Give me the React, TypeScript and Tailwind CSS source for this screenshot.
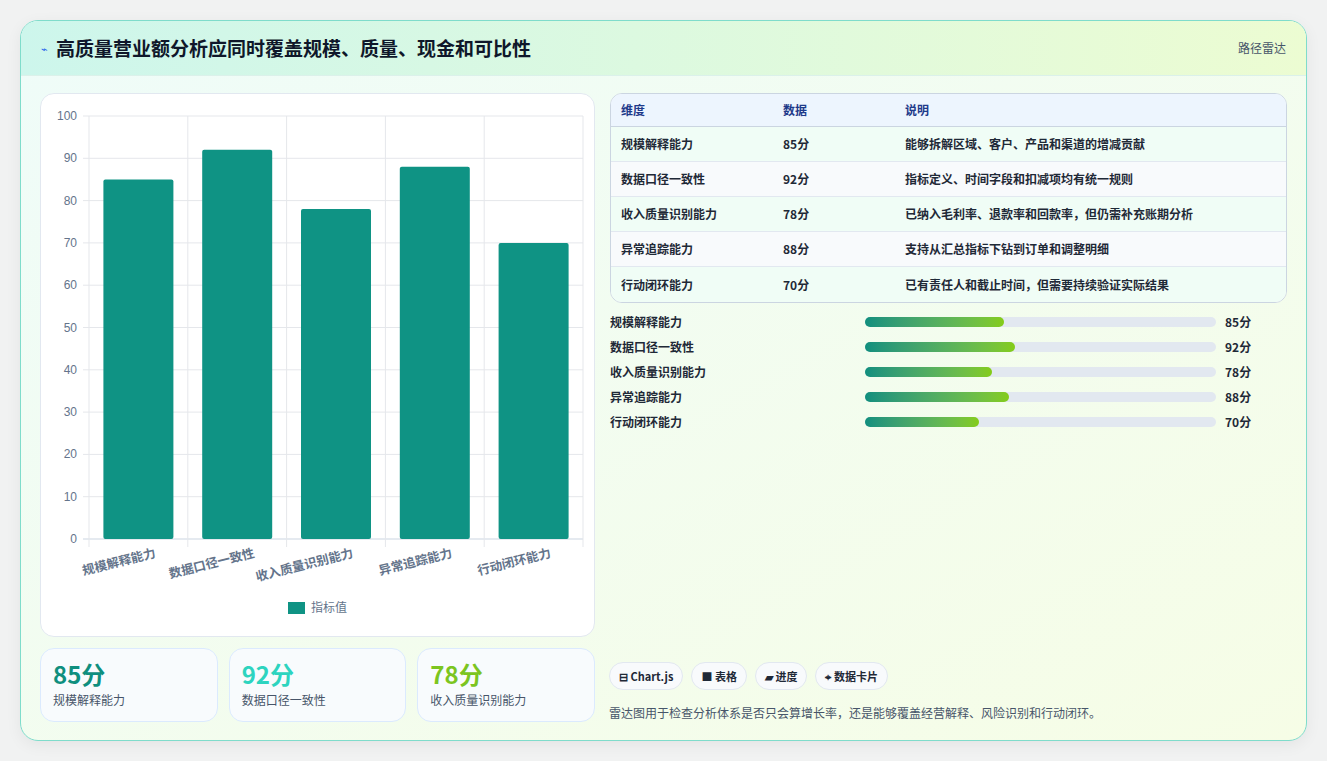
import React from "react";

const data = [
  { n: "规模解释能力", v: 85, d: "能够拆解区域、客户、产品和渠道的增减贡献" },
  { n: "数据口径一致性", v: 92, d: "指标定义、时间字段和扣减项均有统一规则" },
  { n: "收入质量识别能力", v: 78, d: "已纳入毛利率、退款率和回款率，但仍需补充账期分析" },
  { n: "异常追踪能力", v: 88, d: "支持从汇总指标下钻到订单和调整明细" },
  { n: "行动闭环能力", v: 70, d: "已有责任人和截止时间，但需要持续验证实际结果" },
];

const font = { fontFamily: '"Noto Sans CJK SC", "Noto Sans", sans-serif' };

function Chart() {
  const x0 = 48, x1 = 542, y0 = 22, y1 = 445;
  const cw = (x1 - x0) / 5;
  const ticks = [0, 10, 20, 30, 40, 50, 60, 70, 80, 90, 100];
  return (
    <svg width="554" height="543" style={font}>
      {ticks.map((t) => {
        const y = y1 - ((y1 - y0) * t) / 100;
        return (
          <g key={t}>
            <line x1={x0 - 6} x2={x1} y1={y} y2={y} stroke={t === 0 ? "#cbd5e1" : "#e5e7eb"} />
            <text x={x0 - 12} y={y + 4} fontSize="12" fill="#64748b" textAnchor="end" fontFamily="Liberation Sans, sans-serif">{t}</text>
          </g>
        );
      })}
      {[0, 1, 2, 3, 4, 5].map((i) => (
        <line key={i} x1={x0 + i * cw} x2={x0 + i * cw} y1={y0} y2={y1 + 8} stroke="#e5e7eb" />
      ))}
      {data.map((d, i) => {
        const h = ((y1 - y0) * d.v) / 100;
        const cx = x0 + i * cw + cw / 2;
        return (
          <g key={i}>
            <rect x={cx - 35} y={y1 - h} width={70} height={h} fill="#0f9384" rx="2" />
            <text x={cx + 18} y={y1 + 18} fontSize="12.5" fontWeight="600" fill="#64748b" textAnchor="end" transform={`rotate(-14 ${cx + 18} ${y1 + 18})`}>{d.n}</text>
          </g>
        );
      })}
      <rect x={247} y={508} width={17} height={12} fill="#0f9384" />
      <text x={270} y={518} fontSize="12" fill="#64748b">指标值</text>
    </svg>
  );
}

export default function App() {
  return (
    <div className="w-[1327px] h-[761px] bg-[#f1f2f2] pt-[20px] pl-[20px]" style={font}>
      <div className="w-[1287px] h-[721px] rounded-[18px] border border-[#7fdccb] overflow-hidden bg-gradient-to-br from-[#effcf9] to-[#f6fde6] shadow-[0_4px_16px_rgba(0,0,0,0.06)] flex flex-col">
        <div className="h-[55px] flex items-center justify-between px-5 bg-gradient-to-r from-[#cdf6ec] to-[#ecfcd2] border-b border-[#dbf1ea]">
          <div className="flex items-center gap-2">
            <span className="text-[#2563eb] text-[11px]">⌁</span>
            <span className="text-[19px] font-bold text-[#0f172a]">高质量营业额分析应同时覆盖规模、质量、现金和可比性</span>
          </div>
          <span className="text-[12px] text-[#475569]">路径雷达</span>
        </div>
        <div className="flex gap-[15px] px-[19px] pt-[17px]">
          <div className="w-[555px] flex flex-col gap-[11px]">
            <div className="h-[544px] rounded-[14px] bg-white border border-[#e2e8f0]">
              <Chart />
            </div>
            <div className="grid grid-cols-3 gap-[11px]">
              {[["85分", "text-[#0f8f7e]", "规模解释能力"], ["92分", "text-[#2dd4bf]", "数据口径一致性"], ["78分", "text-[#7cc520]", "收入质量识别能力"]].map(([v, c, l]) => (
                <div key={l} className="h-[74px] rounded-[14px] bg-[#f8fbfd] border border-[#dbeafe] px-[12px] pt-[10px]">
                  <div className={`text-[24px] font-bold leading-[30px] ${c}`}>{v}</div>
                  <div className="text-[12px] text-[#475569] mt-[2px]">{l}</div>
                </div>
              ))}
            </div>
          </div>
          <div className="w-[679px] flex flex-col">
            <div className="rounded-[12px] border border-[#cbd5e1] overflow-hidden bg-white text-[12px]">
              <div className="flex h-[33px] items-center bg-[#edf5fe] border-b border-[#cbd5e1] font-bold text-[#1e3a8a]">
                <div className="w-[172px] pl-[10px]">维度</div>
                <div className="w-[122px]">数据</div>
                <div>说明</div>
              </div>
              {data.map((d, i) => (
                <div key={i} className={`flex h-[35px] items-center text-[#1f2937] font-semibold ${i % 2 ? "bg-[#f8fafc]" : "bg-[#f0fdf6]"} ${i < 4 ? "border-b border-[#e2e8f0]" : ""}`}>
                  <div className="w-[172px] pl-[10px]">{d.n}</div>
                  <div className="w-[122px]">{d.v}分</div>
                  <div>{d.d}</div>
                </div>
              ))}
            </div>
            <div className="flex flex-col mt-[10px] gap-[7px]">
              {data.map((d, i) => (
                <div key={i} className="flex items-center h-[18px] text-[12px] font-semibold text-[#1f2937]">
                  <div className="w-[255px]">{d.n}</div>
                  <div className="w-[351px] h-[10px] rounded-full bg-[#e2e8f0]">
                    <div className="h-full rounded-full bg-gradient-to-r from-[#0f8f7e] to-[#84cc16]" style={{ width: `${(d.v / 100) * 46.5}%` }} />
                  </div>
                  <div className="ml-[9px]">{d.v}分</div>
                </div>
              ))}
            </div>
            <div className="flex-1" />
          </div>
        </div>
        <div className="flex-1" />
        <div className="relative">
          <div className="absolute left-[588px] bottom-[18px] flex flex-col gap-[14px]">
            <div className="flex gap-[8px] text-[11px] font-bold text-[#1f2937]">
              {["⊟ Chart.js", "■ 表格", "▰ 进度", "⌖ 数据卡片"].map((t) => (
                <span key={t} className="h-[28px] px-[9px] flex items-center rounded-full bg-[#f8fafc] border border-[#e2e8f0]">{t}</span>
              ))}
            </div>
            <div className="text-[12px] text-[#475569] whitespace-nowrap">雷达图用于检查分析体系是否只会算增长率，还是能够覆盖经营解释、风险识别和行动闭环。</div>
          </div>
        </div>
      </div>
    </div>
  );
}
